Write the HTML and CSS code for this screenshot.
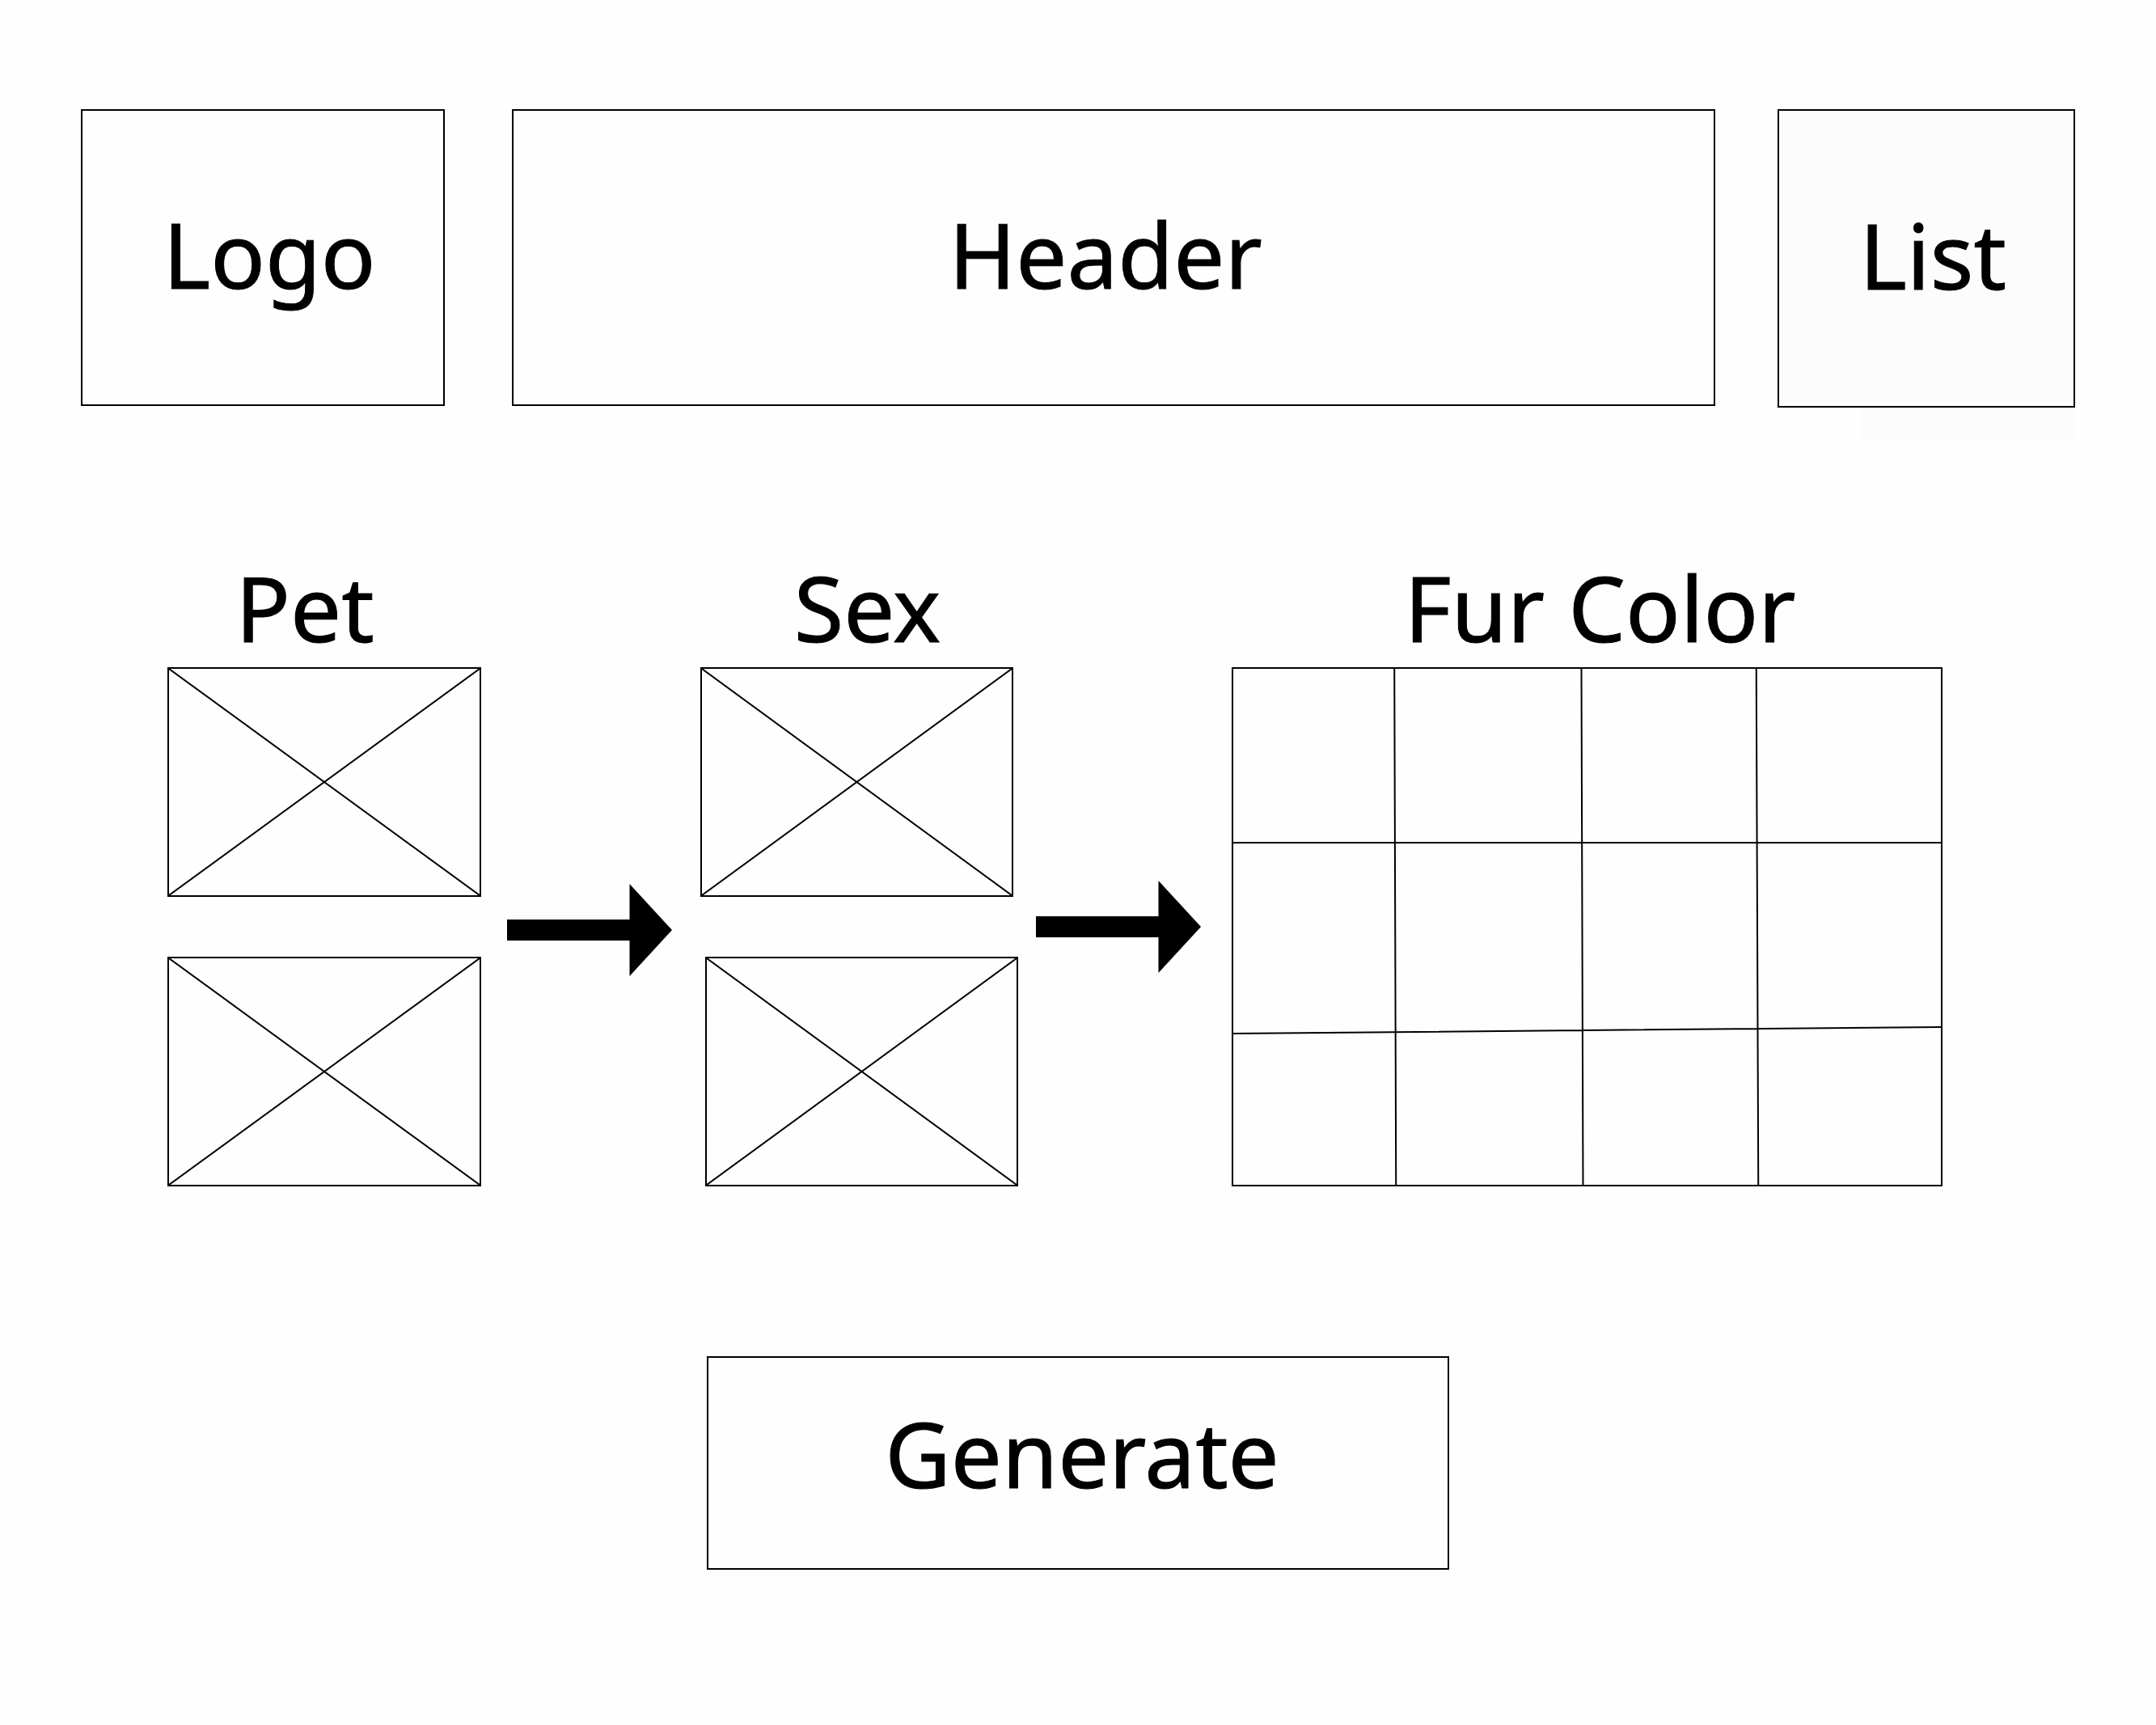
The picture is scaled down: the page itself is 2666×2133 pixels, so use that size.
FILE: index.html
```html
<!DOCTYPE html>
<html lang="en">
<head>
<meta charset="utf-8">
<title>Pet Generator</title>
<link rel="stylesheet" href="styles.css">
</head>
<body>
<svg width="0" height="0" class="defs" aria-hidden="true">
  <symbol id="arrow" viewBox="0 0 204 114"><path d="M0 44H151.500V0L204 57L151.500 114V70H0Z"/></symbol>
  <symbol id="cross" viewBox="0 0 384 280" preserveAspectRatio="none"><path d="M0 0L384 280M384 0L0 280" fill="none" stroke="#000" stroke-width="2"/></symbol>
</svg>
<header class="top">
  <div class="box logo">Logo</div>
  <h1 class="box banner">Header</h1>
  <div class="box list">List</div>
</header>
<main>
  <div class="steps">
    <section class="step">
      <h2 class="title title-pet">Pet</h2>
      <div class="choices">
        <div class="choice"><svg><use href="#cross"/></svg></div>
        <div class="choice"><svg><use href="#cross"/></svg></div>
      </div>
    </section>
    <svg class="arrow arrow-first" viewBox="0 0 204 114" aria-hidden="true"><use href="#arrow"/></svg>
    <section class="step">
      <h2 class="title title-sex">Sex</h2>
      <div class="choices staggered">
        <div class="choice"><svg><use href="#cross"/></svg></div>
        <div class="choice"><svg><use href="#cross"/></svg></div>
      </div>
    </section>
    <svg class="arrow arrow-second" viewBox="0 0 204 114" aria-hidden="true"><use href="#arrow"/></svg>
    <section class="step">
      <h2 class="title title-fur">Fur Color</h2>
      <div class="swatches">
        <svg viewBox="0 0 874 638" preserveAspectRatio="none" aria-hidden="true">
          <path d="M199 0L201 638M430 0L432 638M646 0L648.500 638M0 215H874M0 451L874 443" fill="none" stroke="#000" stroke-width="2"/>
        </svg>
      </div>
    </section>
  </div>
  <button class="box generate" type="button">Generate</button>
</main>
</body>
</html>
```
FILE: styles.css
```css
* {
  box-sizing: border-box;
}

body {
  margin: 0;
  background: #fefefe;
  color: #000;
  font-family: "Noto Sans", "Open Sans", sans-serif;
  font-size: 112px;
  line-height: 128px;
  -webkit-text-stroke: 1px #000;
}

.defs {
  position: absolute;
}

.box {
  display: flex;
  align-items: center;
  justify-content: center;
  margin: 0;
  border: 2px solid #000;
  font-size: 112px;
  font-weight: 400;
}

.top {
  display: flex;
  align-items: flex-start;
  padding: 135px 100px 0;
}

.logo {
  width: 450px;
  height: 367px;
  padding: 0 0 10px 16px;
}

.banner {
  flex: 1;
  height: 367px;
  margin: 0 77px 0 83px;
  padding: 0 20px 10px 0;
}

.list {
  position: relative;
  width: 368px;
  height: 369px;
  padding: 0 0 10px 16px;
  background: #fcfcfc;
}

/* faint tab hanging under the list box */
.list::after {
  content: "";
  position: absolute;
  top: 100%;
  right: -2px;
  width: 264px;
  height: 40px;
  margin-top: 2px;
  background: #fcfcfc;
}

.steps {
  display: grid;
  grid-template-columns: 388fr 271fr 393fr 264fr 879fr;
  align-items: end;
  padding: 183px 264px 0 207px;
}

.title {
  margin: 0 0 10px;
  font-size: 112px;
  font-weight: 400;
  text-align: center;
}

.title-pet {
  padding-right: 48px;
}

.title-sex {
  padding-left: 20px;
}

.title-fur {
  padding-left: 32px;
}

.choices {
  display: flex;
  flex-direction: column;
  gap: 74px;
}

.choice {
  height: 284px;
  border: 2px solid #000;
}

.choice svg,
.swatches svg {
  display: block;
  width: 100%;
  height: 100%;
}

.staggered .choice:first-child {
  margin-right: 6px;
}

.staggered .choice:last-child {
  margin-left: 6px;
}

.swatches {
  height: 642px;
  border: 2px solid #000;
}

.arrow {
  display: block;
  width: 100%;
}

.arrow-first {
  padding: 0 35px 260px 32px;
}

.arrow-second {
  padding: 0 38px 264px 22px;
}

.generate {
  width: 918px;
  height: 264px;
  margin: 210px auto 0;
  padding: 0 0 24px 10px;
  background: transparent;
  color: inherit;
  font-family: inherit;
  line-height: 128px;
}
```
